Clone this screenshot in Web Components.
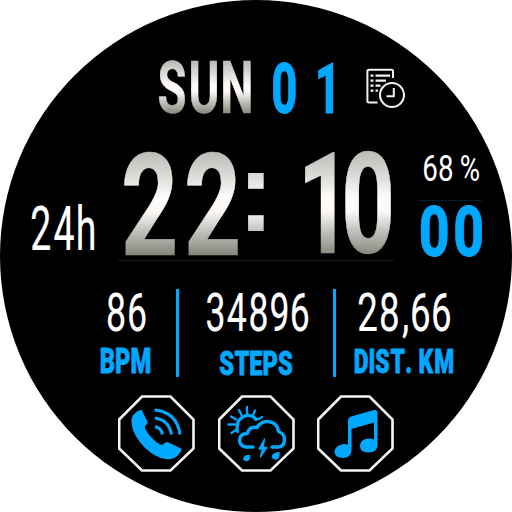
<!DOCTYPE html>
<html lang="en"><head><meta charset="utf-8"><title>Watch face</title>
<style>html,body{margin:0;background:#fff;width:512px;height:512px;overflow:hidden}</style></head>
<body><watch-face></watch-face>
<script>
const SVG='http://www.w3.org/2000/svg';
let ids=0;

/* Condensed text whose ink fills the given width and cap height. */
class FitText extends HTMLElement{
  connectedCallback(){
    const a=(n,d)=>this.hasAttribute(n)?this.getAttribute(n):d;
    const text=a('text',''),w=+a('w',10),h=+a('h',10),gap=+a('gap',0),space=+a('space',0);
    const weight=a('weight','400'),stroke=+a('stroke',0),fill=a('fill','#fff'),family=a('family','Roboto');
    const root=this.attachShadow({mode:'open'});
    const ctx=document.createElement('canvas').getContext('2d');
    const fam=`${family}, "Liberation Sans", sans-serif`;
    ctx.font=`${weight} 200px ${fam}`;
    const chars=[...text];
    const rm=ctx.measureText(a('ref',text));
    const desc=Math.max(0,rm.actualBoundingBoxDescent);
    const over=desc<10?desc:0;
    const fs=200*(h-stroke)/(rm.actualBoundingBoxAscent+over);
    const k=fs/200;
    let ink=0,fixed=0,prev=false;
    const m=chars.map(c=>{
      if(c===' '){fixed+=space;prev=false;return null}
      const t=ctx.measureText(c),l=-t.actualBoundingBoxLeft*k,r=t.actualBoundingBoxRight*k;
      if(prev)fixed+=gap; prev=true;
      ink+=r-l; return {l,w:r-l};
    });
    const sx=(w-fixed)/ink;
    let p=0;prev=false;const xs=[];
    m.forEach(g=>{
      if(!g){xs.push(p/sx);p+=space;prev=false;return}
      if(prev)p+=gap; prev=true;
      xs.push(p/sx-g.l); p+=g.w*sx;
    });
    const id='g'+(ids++);
    const metal=fill==='metal';
    root.innerHTML=`<style>:host{display:block;flex:none;width:${w}px;height:${h}px}svg{display:block;overflow:visible}</style>
    <svg xmlns="${SVG}" width="${w}" height="${h}">
    <defs><linearGradient id="${id}" gradientUnits="userSpaceOnUse" x1="0" x2="0" y1="${a('g1',0)}" y2="${a('g2',h)}">
      <stop offset="0" stop-color="#b9bbb6"/><stop offset=".3" stop-color="#e4e4e1"/><stop offset=".44" stop-color="#fffbf9"/><stop offset=".58" stop-color="#fcf8f6"/><stop offset=".76" stop-color="#c5c5bf"/><stop offset="1" stop-color="#85877c"/></linearGradient></defs>
    <text xml:space="preserve" transform="scale(${sx} 1)" y="${h-stroke/2-over*k}" x="${xs.map(v=>v.toFixed(2)).join(' ')}"
      style='font:${weight} ${fs}px ${fam};white-space:pre' fill="${metal?`url(#${id})`:fill}" stroke="${metal?`url(#${id})`:fill}" stroke-width="${stroke}" stroke-linejoin="miter"></text></svg>`;
    root.querySelector('text').textContent=text;
  }
}
customElements.define('fit-text',FitText);

/* One health figure with its caption. */
class StatCell extends HTMLElement{
  connectedCallback(){
    this.attachShadow({mode:'open'}).innerHTML=`<style>:host{display:flex;flex-direction:column;flex:none;padding-top:4px;gap:var(--cap-gap,16px)}
    ::slotted([slot=caption]){margin-left:var(--cap-left,0)}::slotted([slot=value]){margin-left:var(--val-left,0)}</style><slot name="value"></slot><slot name="caption"></slot>`;
  }
}
customElements.define('stat-cell',StatCell);

/* Octagonal shortcut; the slotted svg is its symbol. */
class OctButton extends HTMLElement{
  connectedCallback(){
    this.attachShadow({mode:'open'}).innerHTML=`<style>:host{display:grid;flex:none;width:78px;height:78px}
    svg,::slotted(svg){grid-area:1/1;width:78px;height:78px;display:block}</style>
    <svg viewBox="0 0 78 78"><path d="M24 1.500H52.500L75.500 24.500V53.500L52.500 75.500H24L1.200 53.500V24.500Z" fill="#000" stroke="#f4f4f4" stroke-width="2.6"/></svg><slot></slot>`;
  }
}
customElements.define('oct-button',OctButton);

class WatchFace extends HTMLElement{
  connectedCallback(){
    this.attachShadow({mode:'open'}).innerHTML=`<style>
    :host{display:flex;flex-direction:column;box-sizing:border-box;width:512px;height:512px;border-radius:50%;background:#000;overflow:hidden;padding-top:61px}
    .row{display:flex;flex:none;align-items:flex-start}
    .date{height:90px;padding-left:159px}
    .date svg{margin:7px 0 0 33px;flex:none}
    .time{height:138px}
    .fmt{padding:55px 0 0 32px;width:86px;flex:none}
    .clock{width:276px;height:110px;box-sizing:border-box;border-bottom:1px solid #171717;flex:none;display:flex;padding-left:6px}
    .side{padding-left:24px;display:flex;flex-direction:column}
    .side i{height:1px;width:64px;background:#04202e;margin:18px 0 3px}
    .stats{height:106px}
    .bar{width:3px;height:88px;background:#00a8ff;flex:none}
    .apps{padding-left:118px;gap:21.5px}
    </style>
    <div class="row date">
      <fit-text text="SUN" w="91.5" h="53" gap="6" weight="700" fill="metal" stroke=".5"></fit-text>
      <fit-text style="margin-left:22.5px" text="0 1" w="60" h="53" space="23" weight="800" stroke=".8" fill="#00a8ff"></fit-text>
      <svg width="39" height="40" viewBox="0 0 39 40" fill="none" stroke="#f2f2f2">
        <path d="M11.500 34.500H3Q1.400 34.500 1.400 33V3.500Q1.400 1.800 3 1.800H25.500Q27 1.800 27 3.500V10" stroke-width="2"/>
        <path d="M4.500 7.700H7.500M4.500 12.700H7.500M4.500 17.700H7.500M4.500 22.700H7.500M9.500 7.700H24M9.500 12.700H20M9.500 17.700H14.500M9.500 22.700H12" stroke-width="2.2"/>
        <circle cx="26" cy="27" r="12" stroke-width="2.1"/>
        <path d="M27.800 20V28.200H20.500" stroke-width="2"/>
      </svg>
    </div>
    <div class="row time">
      <div class="fmt"><fit-text text="24h" w="62" h="44" gap="4.5" weight="400" stroke=".2" ref="24"></fit-text></div>
      <div class="clock">
        <fit-text text="22" w="114" h="104" gap="12" weight="700" fill="metal" stroke=".6"></fit-text>
        <fit-text style="margin:21px 0 0 10px" text=":" w="16" h="59" weight="700" family="Liberation Sans" fill="metal" g1="-21" g2="83"></fit-text>
        <fit-text style="margin-left:41px" text="10" w="86" h="104" gap="11" weight="700" fill="metal" stroke=".6"></fit-text>
      </div>
      <div class="side">
        <fit-text style="margin:4px 0 0 6px" text="68 %" w="55" h="26.500" gap="3" space="9" weight="400" ref="68"></fit-text>
        <i></i>
        <fit-text style="margin-left:3px" text="00" w="61" h="53" gap="8" weight="800" stroke=".8" fill="#00a8ff"></fit-text>
      </div>
    </div>
    <div class="row stats">
      <stat-cell style="margin-left:101px;width:75px;--val-left:7px">
        <fit-text slot="value" text="86" w="37.5" h="39" gap="5" weight="400" stroke=".2"></fit-text>
        <fit-text slot="caption" text="BPM" w="49" h="25.5" gap="2" weight="900" stroke=".8" fill="#00a8ff"></fit-text>
      </stat-cell>
      <div class="bar"></div>
      <stat-cell style="width:126px;margin-left:28px;--cap-left:13px;--cap-gap:18px">
        <fit-text slot="value" text="34896" w="101" h="39" gap="4.5" weight="400" stroke=".2"></fit-text>
        <fit-text slot="caption" text="STEPS" w="72" h="25.5" gap="1.5" weight="900" stroke=".8" fill="#00a8ff"></fit-text>
      </stat-cell>
      <div class="bar"></div>
      <stat-cell style="margin-left:19px;--val-left:4px">
        <fit-text slot="value" text="28,66" w="91" h="39" gap="4.5" weight="400" stroke=".2" ref="2866"></fit-text>
        <fit-text slot="caption" text="DIST. KM" w="98" h="25.5" gap="2" space="9" weight="900" stroke=".8" fill="#00a8ff"></fit-text>
      </stat-cell>
    </div>
    <div class="row apps">
      <oct-button><svg viewBox="0 0 78 78">
        <path d="M23.5 14.5L29.5 27Q30 28.5 27.5 30.5Q26 32 27.5 34.5Q33 44 42 49.5Q44.5 50.5 46 48.5L48 47.2Q49 46.8 50.5 47.5L64 54Q60 63.5 52 64.2Q43 65 32.5 57.5Q20 48 15 35Q12 24 15 20.5Q17.5 16.5 23.5 14.5Z" fill="#00a8ff"/>
        <path d="M37 31.5Q43.5 33 44.5 39.5M37 23Q51 25 53.5 39.5M36.5 15Q59 17 62 39.5" fill="none" stroke="#00a8ff" stroke-width="3.1"/></svg></oct-button>
      <oct-button><svg viewBox="0 0 78 78" fill="none" stroke="#00a8ff" stroke-linecap="round" stroke-linejoin="round">
        <path d="M35 52H28Q21.5 51 21.5 45Q22 38.5 29.5 38.5Q31 31 39 32.5Q43 26 50 26.5Q59.5 27.5 60.5 36.5Q67 39 66.5 45.5Q66 51.5 60.5 52H54" stroke-width="3.4"/>
        <path d="M19.5 36.5Q17.5 25.5 25.5 21.5Q33 18.5 38 24" stroke-width="3.2"/>
        <path d="M29 12V18.5M21 15L23.5 20M37 15.5L35 20M13 21.5L18 24.5M10.5 29.5H17M13.500 38L18 35M44 22Q40.500 25 37 24.500" stroke-width="2.3"/>
        <path d="M46.500 44L41 54H44.500L42.500 62L49 52.500H45Z" fill="#00a8ff" stroke-width="1.3"/>
        <path d="M31.500 60.500Q32 65.500 28.500 65.500Q24.500 65 26.500 62Q28 60.500 31.500 60.500ZM61 57.500Q61.500 64 57.500 64Q53 63.500 55 60Q57 58 61 57.500Z" fill="#00a8ff" stroke-width="1.3"/></svg></oct-button>
      <oct-button><svg viewBox="0 0 78 78" fill="#00a8ff">
        <path d="M31 26Q31 22.500 34 21.500L57 15Q60.500 14.500 60.500 17.500V50Q60.500 57.500 51 57.500Q43 57.500 43 51Q43 44.500 51 43.500Q54 43.200 57 44.500V27.500L34.500 34V56Q33.500 63 26 63Q17.500 62.500 17.500 57Q18 50 27 49Q29 48.800 31 49.500Z"/></svg></oct-button>
    </div>`;
  }
}
customElements.define('watch-face',WatchFace);
</script></body></html>
